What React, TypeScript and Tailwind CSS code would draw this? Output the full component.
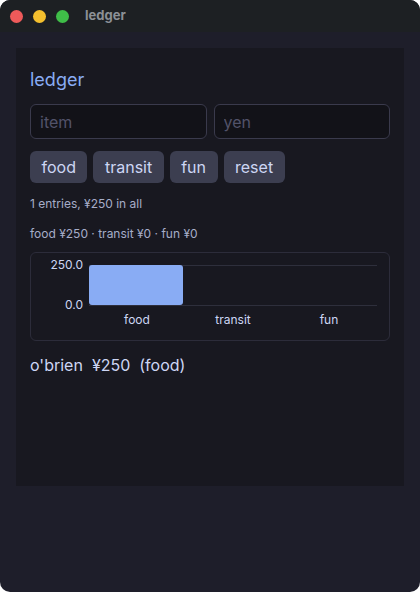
const cats = [
  { name: "food", total: 250 },
  { name: "transit", total: 0 },
  { name: "fun", total: 0 },
];

function Chart() {
  const max = 250;
  return (
    <div className="mt-[11px] h-[89px] rounded-md border border-[#2c2c3a] pt-[5px]">
      <div className="flex">
        <div className="flex h-[54px] w-[58px] flex-col justify-between pr-[6px] text-right text-xs leading-[14px] text-[#cdd6f4]">
          <span>250.0</span>
          <span>0.0</span>
        </div>
        <div className="mr-[12px] flex-1">
          <div className="mt-[7px] flex h-[41px] border-y border-[#2e2f3c]">
            {cats.map((c) => (
              <div key={c.name} className="flex flex-1 items-end pr-[2px]">
                <div
                  className="w-full rounded-[3px] bg-[#89acf4]"
                  style={{ height: `${(c.total / max) * 40}px` }}
                />
              </div>
            ))}
          </div>
          <div className="mt-[6px] flex text-xs text-[#cdd6f4]">
            {cats.map((c) => (
              <span key={c.name} className="flex-1 text-center">
                {c.name}
              </span>
            ))}
          </div>
        </div>
      </div>
    </div>
  );
}

export default function App() {
  return (
    <div className="h-[592px] w-[420px] bg-white font-['Inter','Liberation_Sans',sans-serif]">
      <div className="flex h-full flex-col overflow-hidden rounded-[10px] bg-[#1e1e2a]">
        <div className="flex h-[32px] shrink-0 items-center bg-[#1d2023] pl-[10px]">
          <span className="h-[13px] w-[13px] rounded-full bg-[#ee5a5a]" />
          <span className="ml-[10px] h-[13px] w-[13px] rounded-full bg-[#f4c02e]" />
          <span className="ml-[10px] h-[13px] w-[13px] rounded-full bg-[#3fbd48]" />
          <span className="ml-[16px] text-[13px] font-bold text-[#8c9096]">ledger</span>
        </div>
        <div className="mx-[16px] mt-[16px] h-[438px] bg-[#181820] px-[14px] pt-[20px]">
          <h1 className="text-lg leading-[24px] text-[#89acf4]">ledger</h1>
          <div className="mt-[12px] flex gap-[7px]">
            <input
              placeholder="item"
              className="h-[35px] min-w-0 flex-1 rounded-md border border-[#3a3a4c] bg-[#121218] px-[9px] text-base text-[#cdd6f4] outline-none placeholder:text-[#52536a]"
            />
            <input
              placeholder="yen"
              className="h-[35px] min-w-0 flex-1 rounded-md border border-[#3a3a4c] bg-[#121218] px-[9px] text-base text-[#cdd6f4] outline-none placeholder:text-[#52536a]"
            />
          </div>
          <div className="mt-[12px] flex gap-[6px]">
            {["food", "transit", "fun", "reset"].map((b) => (
              <button
                key={b}
                className="h-[32px] rounded-md bg-[#3c3e50] px-[11.5px] text-base text-[#cdd6f4]"
              >
                {b}
              </button>
            ))}
          </div>
          <p className="mt-[14px] text-xs leading-[14px] text-[#a6adc8]">1 entries, ¥250 in all</p>
          <p className="mt-[16px] text-xs leading-[14px] text-[#a6adc8]">
            food ¥250 · transit ¥0 · fun ¥0
          </p>
          <Chart />
          <p className="mt-[14px] whitespace-pre text-base leading-[20px] text-[#cdd6f4]">
            o'brien  ¥250  (food)
          </p>
        </div>
      </div>
    </div>
  );
}
